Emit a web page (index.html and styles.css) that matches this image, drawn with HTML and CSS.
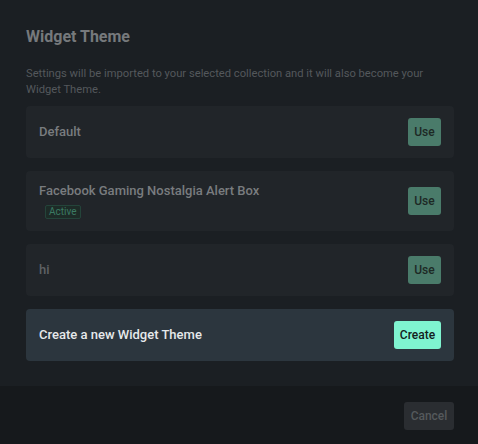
FILE: index.html
```html
<!DOCTYPE html>
<html>
<head>
<meta charset="utf-8">
<link rel="stylesheet" href="styles.css">
</head>
<body>
<div class="modal">
  <div class="content">
    <h2 class="title">Widget Theme</h2>
    <p class="desc">Settings will be imported to your selected collection and it will also become your Widget Theme.</p>
    <div class="list">
      <div class="card">
        <div class="info"><div class="name">Default</div></div>
        <button class="btn use">Use</button>
      </div>
      <div class="card card-tall">
        <div class="info">
          <div class="name">Facebook Gaming Nostalgia Alert Box</div>
          <span class="badge">Active</span>
        </div>
        <button class="btn use">Use</button>
      </div>
      <div class="card">
        <div class="info"><div class="name name-dim">hi</div></div>
        <button class="btn use">Use</button>
      </div>
      <div class="card create-card">
        <div class="info"><div class="name name-light">Create a new Widget Theme</div></div>
        <button class="btn create">Create</button>
      </div>
    </div>
  </div>
  <div class="footer">
    <button class="btn cancel">Cancel</button>
  </div>
</div>
</body>
</html>
```
FILE: styles.css
```css
html, body {
  margin: 0;
  padding: 0;
  background: #1b1f23;
  font-family: Roboto, "Liberation Sans", sans-serif;
}
.modal {
  width: 478px;
  height: 444px;
  display: flex;
  flex-direction: column;
}
.content {
  padding: 27px 24px 24px 26px;
  flex: 1;
}
.title {
  margin: 0;
  font-size: 16px;
  line-height: 20px;
  font-weight: 700;
  color: #76797c;
}
.desc {
  margin: 19px 0 8px 0;
  font-size: 11.2px;
  line-height: 16px;
  color: #54585c;
}
.list {
  display: flex;
  flex-direction: column;
  gap: 13px;
}
.card {
  background: #212529;
  border-radius: 4px;
  display: flex;
  align-items: center;
  justify-content: space-between;
  padding: 12px 13px;
  min-height: 28px;
}
.card-tall {
  padding: 11px 13px 12px 13px;
}
.create-card {
  background: #2c363e;
}
.name {
  font-size: 13px;
  line-height: 18px;
  font-weight: 500;
  color: #797c7f;
}
.name-dim {
  color: #5e6164;
}
.name-light {
  color: #e6e9eb;
}
.badge {
  display: inline-block;
  margin: 3px 0 0 6px;
  padding: 0 3px;
  font-size: 10px;
  line-height: 12px;
  color: #3b7a63;
  background: #1d2b27;
  border: 1px solid #24443a;
  border-radius: 2px;
}
.btn {
  border: none;
  font-family: inherit;
  font-size: 12px;
  font-weight: 500;
  height: 28px;
  border-radius: 3px;
  padding: 0;
  cursor: pointer;
}
.use {
  background: #4a7b6a;
  color: #1d2925;
  width: 33px;
}
.create {
  background: #7ff4d0;
  color: #13201c;
  width: 47px;
}
.footer {
  background: #16191c;
  height: 58px;
  display: flex;
  justify-content: flex-end;
  align-items: flex-start;
  padding: 16px 24px 0 0;
  box-sizing: border-box;
}
.cancel {
  background: #2a2d31;
  color: #55595c;
  width: 50px;
}
```
